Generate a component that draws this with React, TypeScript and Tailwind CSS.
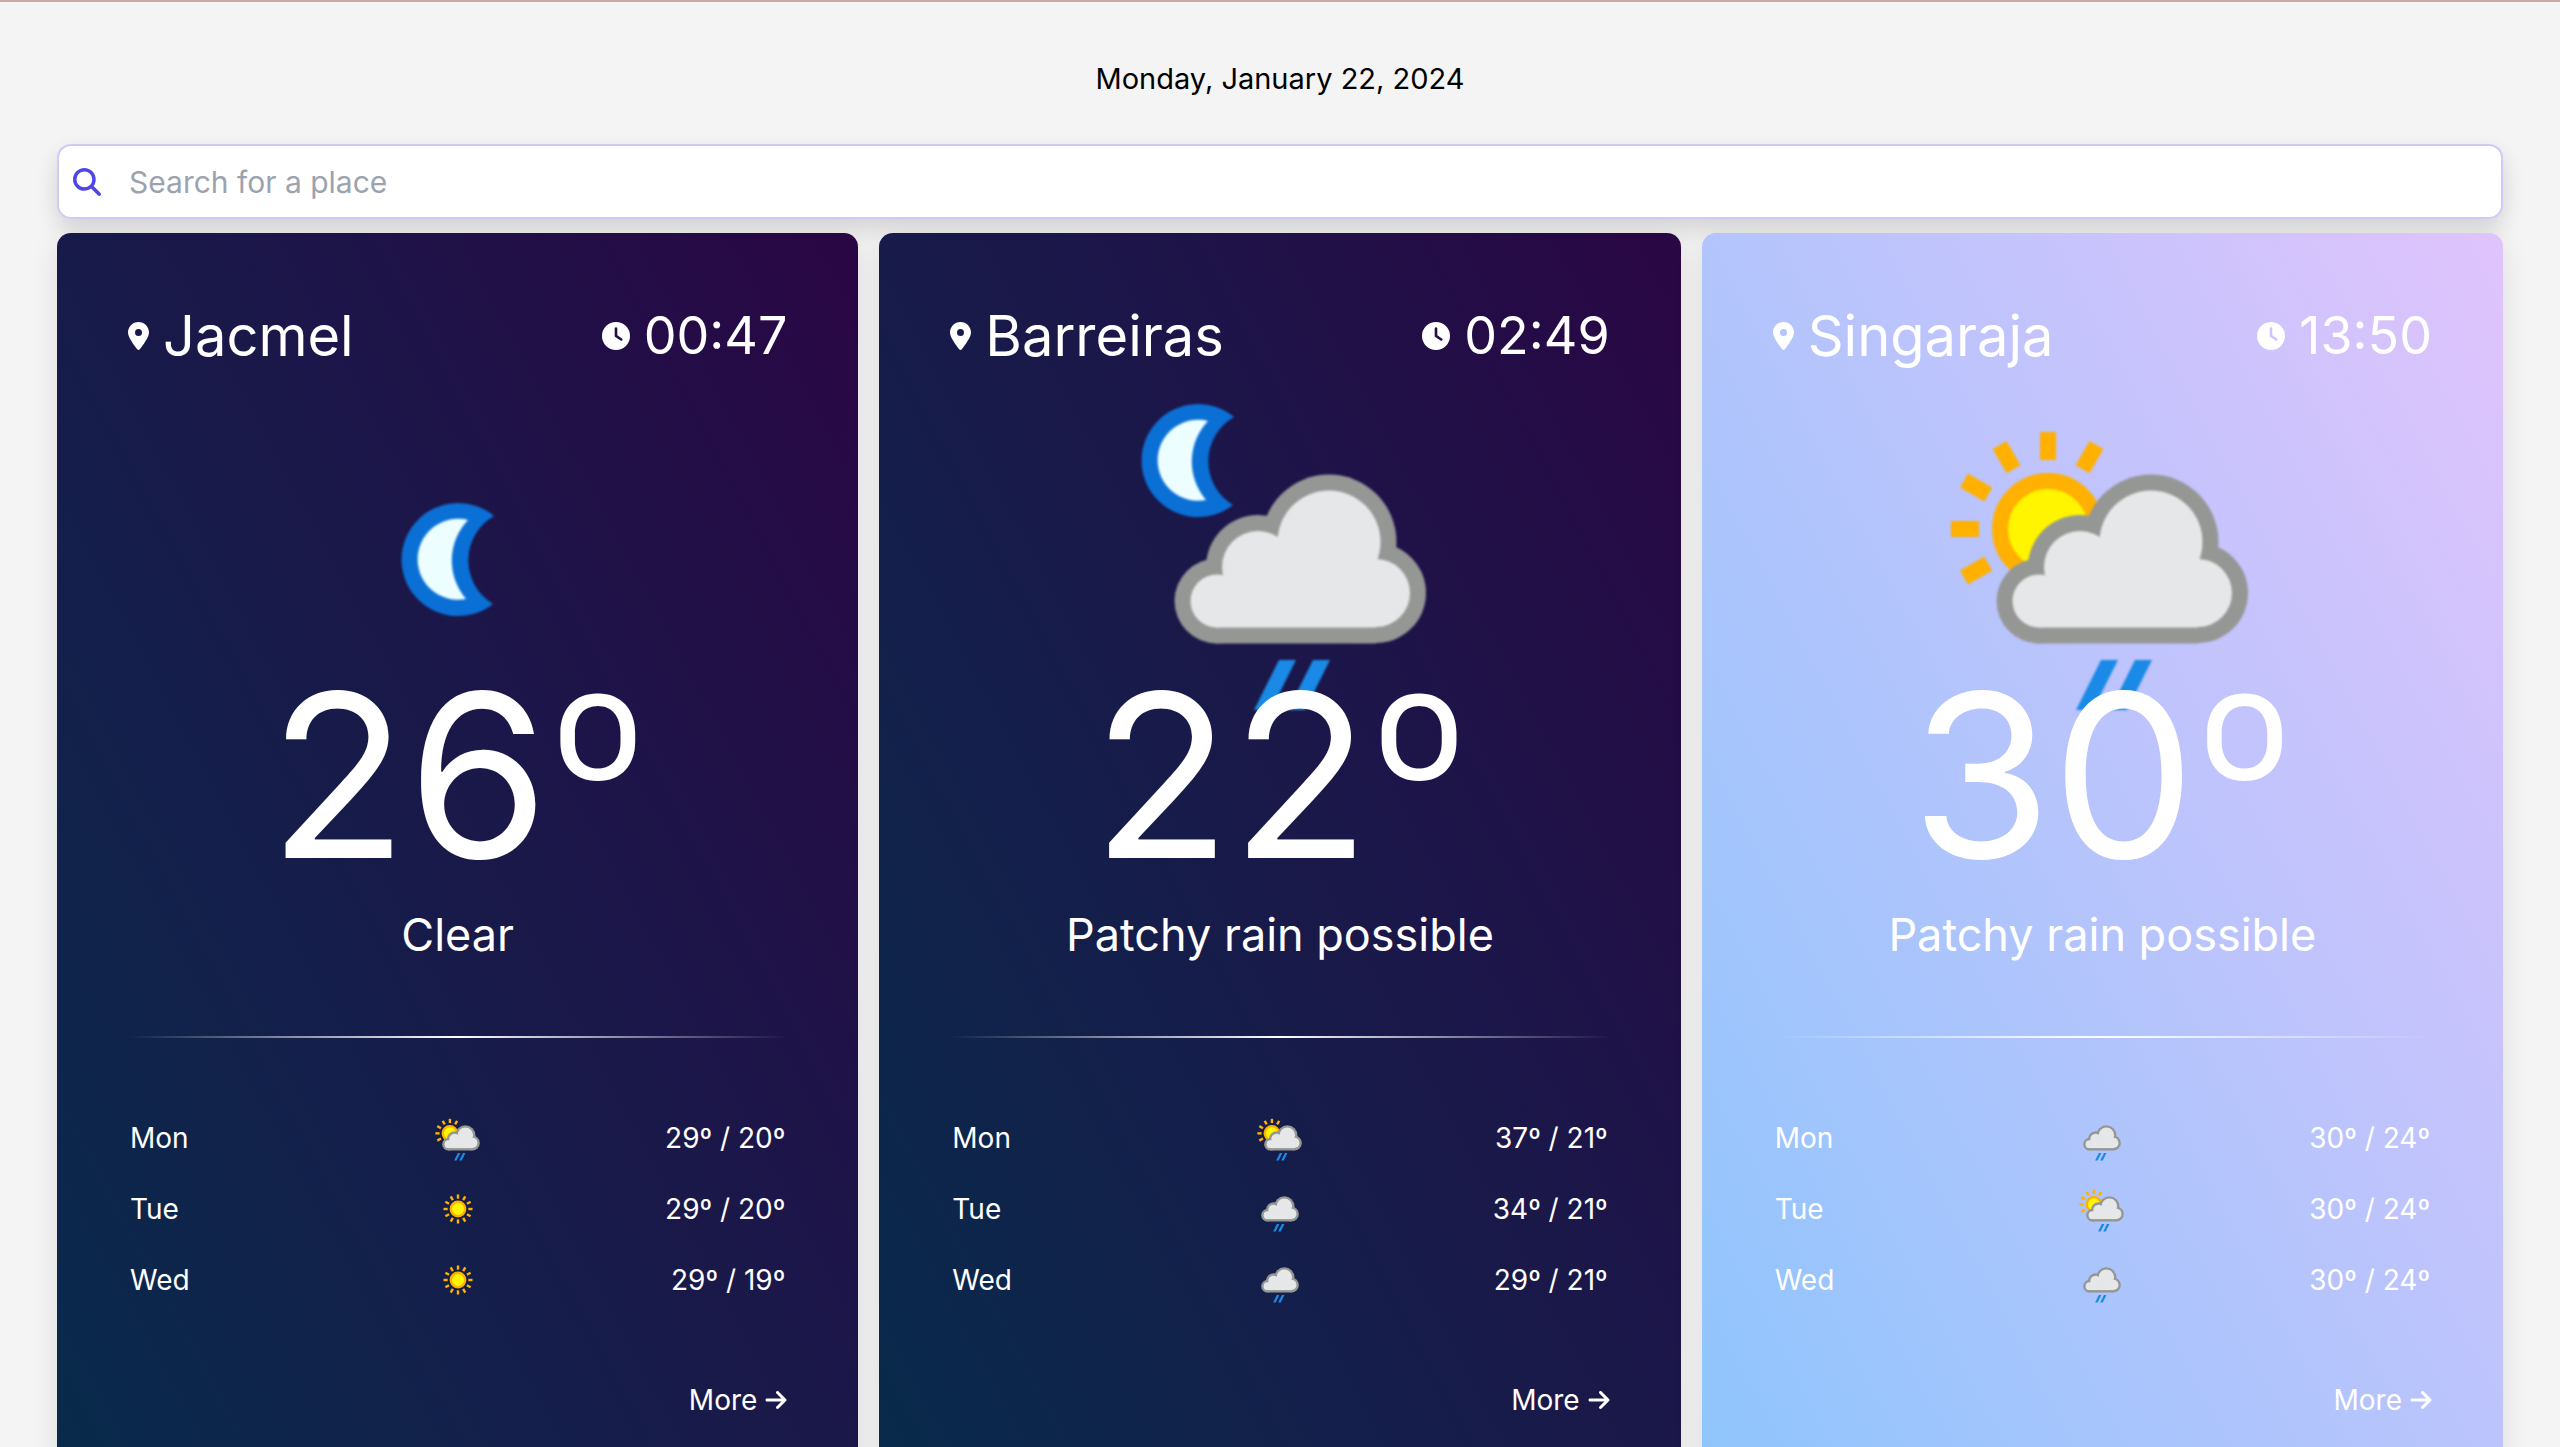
import { FaArrowRight, FaClock, FaLocationDot, FaMagnifyingGlass } from "react-icons/fa6";

type Weather = "clear-night" | "rain-night" | "rain-day" | "rain" | "sunny";

type City = {
  name: string;
  time: string;
  night: boolean;
  weather: Weather;
  temperature: number;
  condition: string;
  forecast: { day: string; weather: Weather; high: number; low: number }[];
};

const cities: City[] = [
  {
    name: "Jacmel",
    time: "00:47",
    night: true,
    weather: "clear-night",
    temperature: 26,
    condition: "Clear",
    forecast: [
      { day: "Mon", weather: "rain-day", high: 29, low: 20 },
      { day: "Tue", weather: "sunny", high: 29, low: 20 },
      { day: "Wed", weather: "sunny", high: 29, low: 19 },
    ],
  },
  {
    name: "Barreiras",
    time: "02:49",
    night: true,
    weather: "rain-night",
    temperature: 22,
    condition: "Patchy rain possible",
    forecast: [
      { day: "Mon", weather: "rain-day", high: 37, low: 21 },
      { day: "Tue", weather: "rain", high: 34, low: 21 },
      { day: "Wed", weather: "rain", high: 29, low: 21 },
    ],
  },
  {
    name: "Singaraja",
    time: "13:50",
    night: false,
    weather: "rain-day",
    temperature: 30,
    condition: "Patchy rain possible",
    forecast: [
      { day: "Mon", weather: "rain", high: 30, low: 24 },
      { day: "Tue", weather: "rain-day", high: 30, low: 24 },
      { day: "Wed", weather: "rain", high: 30, low: 24 },
    ],
  },
];

function Moon() {
  return (
    <g>
      <path d="M141 44A56.5 56.5 0 1 0 140 132A51 51 0 0 1 141 44Z" fill="#0b70d6" />
      <path d="M115 48A40.5 40.5 0 1 0 113 127A59 59 0 0 1 115 48Z" fill="#ecfeff" />
    </g>
  );
}

function Sun({ rays }: { rays: number[] }) {
  return (
    <g>
      <circle r="48" fill="#fff500" stroke="#ffb000" strokeWidth="16" />
      {rays.map((angle) => (
        <rect key={angle} x="-8" y="-97" width="16" height="28" fill="#ffb000" transform={`rotate(${angle})`} />
      ))}
    </g>
  );
}

function RainCloud() {
  return (
    <g>
      <g fill="#959795">
        <circle cx="236" cy="169" r="67.5" />
        <circle cx="165" cy="194" r="52" />
        <circle cx="124" cy="228" r="42.5" />
        <circle cx="283" cy="220" r="50" />
        <rect x="122" y="210" width="161" height="60.5" />
      </g>
      <g fill="#e6e7e9">
        <circle cx="236" cy="169" r="51.5" />
        <circle cx="165" cy="194" r="36" />
        <circle cx="124" cy="228" r="26.5" />
        <circle cx="283" cy="220" r="34" />
        <rect x="123" y="205" width="160" height="49.5" />
      </g>
      <path d="M186 287H203L178 337H161ZM220 287H237L212 337H195Z" fill="#1a8ae6" />
    </g>
  );
}

const fullRays = [0, 30, 60, 90, 120, 150, 180, 210, 240, 270, 300, 330];
const openRays = [0, 30, 240, 270, 300, 330];

function WeatherIcon({ weather, className }: { weather: Weather; className: string }) {
  return (
    <svg viewBox="0 0 374 374" className={className} role="img" aria-label={weather}>
      {weather === "clear-night" && (
        <g transform="translate(82 99)">
          <Moon />
        </g>
      )}
      {weather === "rain-night" && <Moon />}
      {weather === "rain-day" && (
        <g transform="translate(133 156)">
          <Sun rays={openRays} />
        </g>
      )}
      {weather === "sunny" && (
        <g transform="translate(187 187)">
          <Sun rays={fullRays} />
        </g>
      )}
      {(weather === "rain-night" || weather === "rain-day") && <RainCloud />}
      {weather === "rain" && (
        <g transform="translate(-20 0)">
          <RainCloud />
        </g>
      )}
    </svg>
  );
}

function CityCard({ city }: { city: City }) {
  const background = city.night
    ? "bg-[linear-gradient(62deg,#082b4c_0%,#1d1549_62%,#2a0644_100%)]"
    : "bg-[linear-gradient(62deg,#8ec5fc_0%,#e0c3fc_100%)]";
  return (
    <article className={`flex flex-col rounded-[14px] px-[71px] py-[72px] text-white shadow-[0_8px_30px_rgba(0,0,0,0.09)] ${background}`}>
      <header className="flex items-center justify-between leading-[62px]">
        <h2 className="flex items-center gap-3.5 text-[56px]">
          <FaLocationDot className="h-7 w-[21px]" />
          {city.name}
        </h2>
        <p className="flex items-center gap-3.5 text-[52px]">
          <FaClock className="size-7" />
          {city.time}
        </p>
      </header>
      <WeatherIcon weather={city.weather} className="mt-1.5 size-[374px] self-center blur-[1px]" />
      <p className="relative mt-[-84px] text-center text-[228px] leading-[224px]">
        {city.temperature}
        <span className="font-light">º</span>
      </p>
      <p className="mt-5 text-center text-[45px] leading-[56px]">{city.condition}</p>
      <hr className="mt-[73px] h-0.5 border-0 bg-[linear-gradient(90deg,transparent,white,transparent)]" />
      <table className="mt-16 w-full table-fixed text-[28px] leading-[40px]">
        <tbody>
          {city.forecast.map((entry) => (
            <tr key={entry.day} className="h-[71px]">
              <th scope="row" className="pl-0.5 text-left font-normal">
                {entry.day}
              </th>
              <td>
                <WeatherIcon weather={entry.weather} className="mx-auto size-14" />
              </td>
              <td className="pr-0.5 text-right">
                {entry.high}º / {entry.low}º
              </td>
            </tr>
          ))}
        </tbody>
      </table>
      <a href="#" className="mt-16 flex items-center gap-2 self-end text-[28px] leading-[42px]">
        More
        <FaArrowRight className="h-6 w-[22px]" />
      </a>
    </article>
  );
}

export default function App() {
  return (
    <main className="min-h-screen border-t-2 border-[#c9a8a5] bg-[#f4f4f4] px-[57px] pb-14 font-['Inter',sans-serif] text-black">
      <p className="pt-[57px] pb-[45px] text-center text-[29px] leading-[40px]">Monday, January 22, 2024</p>
      <label className="flex h-[75px] items-center gap-7 rounded-[14px] border-2 border-[#cfcbf6] bg-white pl-3.5 shadow-[0_10px_22px_rgba(0,0,0,0.14)]">
        <FaMagnifyingGlass className="size-7 text-[#4f46e5]" />
        <input
          type="text"
          aria-label="Search for a place"
          placeholder="Search for a place"
          className="h-full flex-1 bg-transparent text-[30px] outline-none placeholder:text-[#9ca3af]"
        />
      </label>
      <section className="mt-3.5 grid grid-cols-3 gap-[21px]">
        {cities.map((city) => (
          <CityCard key={city.name} city={city} />
        ))}
      </section>
    </main>
  );
}
